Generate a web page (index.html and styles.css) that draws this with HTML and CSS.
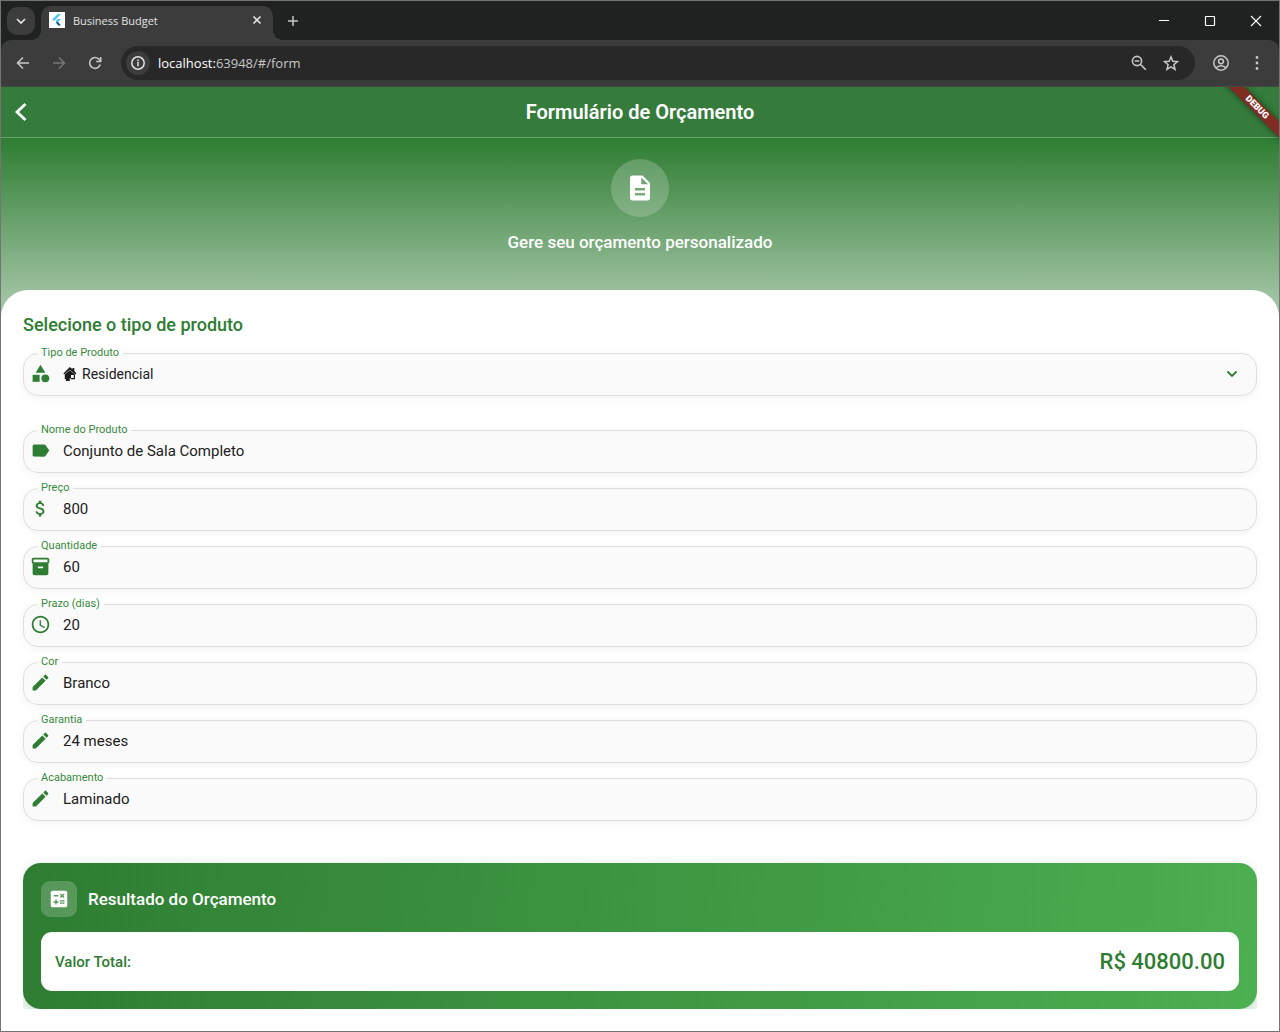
FILE: index.html
```html
<!DOCTYPE html>
<html lang="pt-BR">
<head>
<meta charset="utf-8">
<meta name="viewport" content="width=device-width, initial-scale=1">
<title>Business Budget</title>
<link rel="stylesheet" href="styles.css">
</head>
<body>
<div class="window">
  <div class="tab-strip">
    <button class="tab-search" aria-label="Search tabs"><svg width="12" height="12" viewBox="0 0 12 12" fill="none" stroke="currentColor" stroke-width="1.700"><path d="M2 4l4 4 4-4"/></svg></button>
    <div class="tab">
      <svg class="favicon" width="16" height="16" viewBox="0 0 16 16"><path fill="#fff" d="M0 0h16v16H0z"/><path fill="#47c5fb" d="M8.800 2H12L5 9 3.400 7.400zM8.800 7H12L8 11 6.400 9.400z"/><path fill="#00569e" d="M7 10.700l1.500-1.300L12 13.500H9.300z"/></svg>
      <span class="tab-title">Business Budget</span>
      <button class="tab-close" aria-label="Close tab"><svg width="10" height="10" viewBox="0 0 10 10" stroke="currentColor" stroke-width="1.600"><path d="M1.500 1.500l7 7M8.500 1.500l-7 7"/></svg></button>
    </div>
    <button class="new-tab" aria-label="New tab"><svg width="12" height="12" viewBox="0 0 12 12" stroke="currentColor" stroke-width="1.500"><path d="M6 1v10M1 6h10"/></svg></button>
    <div class="window-controls">
      <button aria-label="Minimize"><svg width="12" height="12" viewBox="0 0 12 12" stroke="currentColor"><path d="M1 5.500h10"/></svg></button>
      <button aria-label="Maximize"><svg width="12" height="12" viewBox="0 0 12 12" fill="none" stroke="currentColor" stroke-width="1.200"><rect x="1.500" y="1.500" width="9" height="9" rx=".5"/></svg></button>
      <button aria-label="Close"><svg width="12" height="12" viewBox="0 0 12 12" stroke="currentColor" stroke-width="1.200"><path d="M1 1l10 10M11 1L1 11"/></svg></button>
    </div>
  </div>
  <div class="toolbar">
    <button class="nav" aria-label="Back"><svg width="16" height="16" viewBox="0 0 16 16" fill="none" stroke="currentColor" stroke-width="1.600"><path d="M14 8H3M8 2.500L2.500 8 8 13.500"/></svg></button>
    <button class="nav nav-off" aria-label="Forward"><svg width="16" height="16" viewBox="0 0 16 16" fill="none" stroke="currentColor" stroke-width="1.600"><path d="M2 8h11M8 2.500L13.500 8 8 13.500"/></svg></button>
    <button class="nav" aria-label="Reload"><svg width="16" height="16" viewBox="0 0 16 16" fill="none" stroke="currentColor" stroke-width="1.600"><path d="M13.200 9.500A5.400 5.400 0 1 1 12.300 4.600L13.600 6M13.700 2v4.500H9.200"/></svg></button>
    <div class="omnibox">
      <button class="site-info" aria-label="Site information"><svg width="16" height="16" viewBox="0 0 16 16" fill="none" stroke="currentColor" stroke-width="1.500"><circle cx="8" cy="8" r="6.200"/><path d="M8 7v4.200M8 4.600v1.600"/></svg></button>
      <div class="url"><span class="host">localhost:</span>63948/#/form</div>
      <button class="nav" aria-label="Zoom"><svg width="18" height="18" viewBox="0 0 18 18" fill="none" stroke="currentColor" stroke-width="1.600"><circle cx="7" cy="7" r="4.600"/><path d="M10.300 10.300L15.800 15.800M4.700 7h4.600"/></svg></button>
      <button class="nav" aria-label="Bookmark"><svg width="16" height="16" viewBox="0 0 16 16" fill="none" stroke="currentColor" stroke-width="1.500"><path d="M8 1.800l1.800 4.400 4.700.4-3.600 3.100 1.100 4.600L8 11.800l-4 2.500 1.100-4.600L1.500 6.600l4.700-.4z"/></svg></button>
    </div>
    <button class="nav" aria-label="Profile"><svg width="18" height="18" viewBox="0 0 18 18" fill="none" stroke="currentColor" stroke-width="1.500"><circle cx="9" cy="9" r="7.200"/><circle cx="9" cy="7.300" r="2.400"/><path d="M4 14c2.500-3 7.500-3 10 0"/></svg></button>
    <button class="nav" aria-label="Menu"><svg width="16" height="16" viewBox="0 0 16 16" fill="currentColor"><circle cx="8" cy="2.500" r="1.400"/><circle cx="8" cy="8" r="1.400"/><circle cx="8" cy="13.500" r="1.400"/></svg></button>
  </div>

  <main class="app">
    <header class="app-bar">
      <button class="back" aria-label="Voltar"><svg width="14" height="20" viewBox="0 0 14 20" fill="none" stroke="#fff" stroke-width="2.800"><path d="M11.500 2L3 10l8.500 8"/></svg></button>
      <h1>Formulário de Orçamento</h1>
      <div class="banner-corner"><div class="banner">DEBUG</div></div>
    </header>
    <section class="hero">
      <div class="hero-icon"><svg width="30" height="30" viewBox="0 0 24 24" fill="#fff"><path d="M14 2H6c-1.100 0-1.990.9-1.990 2L4 20c0 1.100.89 2 1.990 2H18c1.100 0 2-.9 2-2V8l-6-6zm2 16H8v-2h8v2zm0-4H8v-2h8v2zm-3-5V3.500L18.500 9H13z"/></svg></div>
      <p>Gere seu orçamento personalizado</p>
    </section>
    <form class="sheet">
      <h2>Selecione o tipo de produto</h2>
      <fieldset class="field">
        <legend><label for="tipo">Tipo de Produto</label></legend>
        <div class="control">
          <svg class="icon" viewBox="0 0 24 24"><path d="M12 2l-5.500 9h11z"/><circle cx="17.500" cy="17.500" r="4.500"/><path d="M3 13.500h8v8H3z"/></svg>
          <svg class="house" width="14" height="16" viewBox="0 0 14 16"><path fill="#1c1c1c" d="M6.800 1L9.500 3.200V2h1.800v2.700L13.300 7.400l-.8 1L6.800 3.800 1.200 8.400l-.8-1zM6.800 4.200L12 8.400V13.200H7.600V12h3.200V9H8v3H6.800v3H3v-1.800H1.800V8.400z"/></svg>
          <select id="tipo"><option>Residencial</option><option>Comercial</option></select>
          <svg class="chevron" width="12" height="12" viewBox="0 0 12 12"><path d="M1.500 3.500L6 8l4.500-4.500"/></svg>
        </div>
      </fieldset>
      <div class="fields">
        <fieldset class="field">
          <legend><label for="nome">Nome do Produto</label></legend>
          <div class="control"><svg class="icon" viewBox="0 0 24 24"><path d="M17.630 5.840C17.270 5.330 16.670 5 16 5L5 5.010C3.900 5.010 3 5.900 3 7v10c0 1.100.9 1.990 2 1.990L16 19c.67 0 1.270-.33 1.630-.84L22 12l-4.370-6.160z"/></svg><input id="nome" type="text" value="Conjunto de Sala Completo"></div>
        </fieldset>
        <fieldset class="field">
          <legend><label for="preco">Preço</label></legend>
          <div class="control"><svg class="icon" viewBox="0 0 24 24"><path d="M11.800 10.900c-2.270-.59-3-1.200-3-2.150 0-1.090 1.010-1.850 2.700-1.850 1.780 0 2.440.85 2.500 2.100h2.210c-.07-1.720-1.120-3.300-3.210-3.810V3h-3v2.160c-1.940.42-3.500 1.680-3.500 3.610 0 2.310 1.910 3.460 4.700 4.130 2.500.6 3 1.480 3 2.410 0 .69-.49 1.790-2.700 1.790-2.060 0-2.870-.92-2.980-2.100h-2.200c.12 2.190 1.760 3.420 3.680 3.830V21h3v-2.150c1.950-.37 3.500-1.500 3.500-3.550 0-2.840-2.430-3.810-4.700-4.400z"/></svg><input id="preco" type="text" value="800"></div>
        </fieldset>
        <fieldset class="field">
          <legend><label for="quantidade">Quantidade</label></legend>
          <div class="control"><svg class="icon" viewBox="0 0 24 24"><path fill-rule="evenodd" d="M20 2H4c-1 0-2 .9-2 2v3.010c0 .72.43 1.340 1 1.690V20c0 1.100 1.100 2 2 2h14c.9 0 2-.9 2-2V8.700c.57-.35 1-.97 1-1.690V4c0-1.100-1-2-2-2zm-5 12H9v-2h6v2zm5-7H4V4h16v3z"/></svg><input id="quantidade" type="text" value="60"></div>
        </fieldset>
        <fieldset class="field">
          <legend><label for="prazo">Prazo (dias)</label></legend>
          <div class="control"><svg class="icon" viewBox="0 0 24 24"><path d="M11.990 2C6.470 2 2 6.480 2 12s4.470 10 9.990 10C17.520 22 22 17.520 22 12S17.520 2 11.990 2zM12 20c-4.420 0-8-3.580-8-8s3.580-8 8-8 8 3.580 8 8-3.580 8-8 8zm.5-13H11v6l5.250 3.150.75-1.230-4.500-2.670z"/></svg><input id="prazo" type="text" value="20"></div>
        </fieldset>
        <fieldset class="field">
          <legend><label for="cor">Cor</label></legend>
          <div class="control"><svg class="icon" viewBox="0 0 24 24"><path d="M3 17.250V21h3.750L17.810 9.940l-3.750-3.750L3 17.250zM20.710 7.040c.39-.39.39-1.020 0-1.410l-2.340-2.340c-.39-.39-1.020-.39-1.410 0l-1.830 1.830 3.750 3.750 1.830-1.830z"/></svg><input id="cor" type="text" value="Branco"></div>
        </fieldset>
        <fieldset class="field">
          <legend><label for="garantia">Garantia</label></legend>
          <div class="control"><svg class="icon" viewBox="0 0 24 24"><path d="M3 17.250V21h3.750L17.810 9.940l-3.750-3.750L3 17.250zM20.710 7.040c.39-.39.39-1.020 0-1.410l-2.340-2.340c-.39-.39-1.020-.39-1.410 0l-1.830 1.830 3.750 3.750 1.830-1.830z"/></svg><input id="garantia" type="text" value="24 meses"></div>
        </fieldset>
        <fieldset class="field">
          <legend><label for="acabamento">Acabamento</label></legend>
          <div class="control"><svg class="icon" viewBox="0 0 24 24"><path d="M3 17.250V21h3.750L17.810 9.940l-3.750-3.750L3 17.250zM20.710 7.040c.39-.39.39-1.020 0-1.410l-2.340-2.340c-.39-.39-1.020-.39-1.410 0l-1.830 1.830 3.750 3.750 1.830-1.830z"/></svg><input id="acabamento" type="text" value="Laminado"></div>
        </fieldset>
      </div>
      <div class="result-clip">
        <section class="result">
          <div class="result-head">
            <div class="result-icon"><svg width="22" height="22" viewBox="0 0 24 24" fill="#fff"><path d="M19 3H5c-1.100 0-2 .9-2 2v14c0 1.100.9 2 2 2h14c1.100 0 2-.9 2-2V5c0-1.100-.9-2-2-2zm-5.970 4.060L14.090 6l1.410 1.410L16.910 6l1.060 1.060-1.410 1.410 1.410 1.410-1.060 1.060-1.410-1.400-1.410 1.410-1.060-1.060 1.410-1.410-1.410-1.420zm-6.780.66h5v1.500h-5v-1.500zM11.500 16h-2v2H8v-2H6v-1.500h2v-2h1.500v2h2V16zm6.500 1.250h-5v-1.500h5v1.500zm0-2.500h-5v-1.500h5v1.500z"/></svg></div>
            <h3>Resultado do Orçamento</h3>
          </div>
          <div class="total">
            <span class="total-label">Valor Total:</span>
            <output class="total-value">R$ 40800.00</output>
          </div>
        </section>
      </div>
    </form>
  </main>
</div>
</body>
</html>
```
FILE: styles.css
```css
:root {
  --green: #2e7d32;
  --chrome: #3c3c3c;
  --strip: #1f2221;
}

* {
  box-sizing: border-box;
}

body {
  margin: 0;
  font-family: Roboto, "Liberation Sans", sans-serif;
  background: #fff;
}

h1, h2, h3, p {
  margin: 0;
}

button {
  display: grid;
  place-items: center;
  padding: 0;
  border: 0;
  background: none;
  color: #c7c7c7;
}

svg {
  display: block;
  flex: none;
}

.window {
  display: flex;
  flex-direction: column;
  min-height: 100vh;
  border: 1px solid #747474;
  background: var(--strip);
}

/* Browser frame */
.tab-strip {
  display: flex;
  align-items: center;
  height: 39px;
  padding-left: 6px;
}

.tab-search {
  width: 28px;
  height: 28px;
  border-radius: 10px;
  background: var(--chrome);
  color: #e3e3e3;
}

.tab {
  position: relative;
  align-self: flex-end;
  display: flex;
  align-items: center;
  gap: 8px;
  width: 232px;
  height: 34px;
  margin-left: 6px;
  padding: 0 8px 6px;
  border-radius: 10px 10px 0 0;
  background: var(--chrome);
}

.tab::before,
.tab::after {
  content: "";
  position: absolute;
  bottom: 0;
  width: 10px;
  height: 10px;
}

.tab::before {
  right: 100%;
  background: radial-gradient(circle at 0 0, transparent 10px, var(--chrome) 10px);
}

.tab::after {
  left: 100%;
  background: radial-gradient(circle at 100% 0, transparent 10px, var(--chrome) 10px);
}

.tab-title {
  flex: 1;
  font: 11px "Open Sans", "Noto Sans", sans-serif;
  color: #e3e3e3;
}

.tab-close {
  width: 16px;
  height: 16px;
  color: #e3e3e3;
}

.new-tab {
  width: 28px;
  height: 28px;
  margin-left: 6px;
}

.window-controls {
  display: flex;
  margin-left: auto;
}

.window-controls button {
  width: 46px;
  height: 38px;
  color: #fff;
}

.toolbar {
  display: flex;
  align-items: center;
  gap: 8px;
  height: 47px;
  padding: 0 8px;
  border-bottom: 1px solid #474747;
  border-radius: 10px 10px 0 0;
  background: var(--chrome);
}

.nav {
  width: 28px;
  height: 28px;
}

.nav-off {
  color: #757575;
}

.omnibox {
  flex: 1;
  display: flex;
  align-items: center;
  gap: 4px;
  height: 34px;
  margin: 0 4px;
  padding: 0 10px 0 5px;
  border-radius: 17px;
  background: #282828;
}

.site-info {
  width: 24px;
  height: 24px;
  border-radius: 50%;
  background: var(--chrome);
  color: #e3e3e3;
}

.url {
  flex: 1;
  padding-left: 4px;
  font: 13px "Open Sans", "Noto Sans", sans-serif;
  color: #c7c7c7;
}

.host {
  color: #fff;
}

/* App */
.app {
  flex: 1;
  display: flex;
  flex-direction: column;
  background: linear-gradient(var(--green) 51px, #9fc2a1 211px, #a9c9ab 240px);
}

.app-bar {
  position: relative;
  display: grid;
  grid-template-columns: 40px 1fr 40px;
  align-items: center;
  height: 51px;
  border-bottom: 1px solid #6aa26d;
  background: #347b3c;
}

.back {
  width: 40px;
  height: 40px;
}

.app-bar h1 {
  font-size: 20px;
  line-height: 24px;
  font-weight: 600;
  text-align: center;
  color: #fff;
}

.banner-corner {
  position: absolute;
  top: 0;
  right: 0;
  width: 60px;
  height: 60px;
  overflow: hidden;
}

.banner {
  position: absolute;
  top: 15px;
  left: -12px;
  width: 100px;
  transform: rotate(45deg);
  background: #802c22;
  box-shadow: 0 0 6px rgba(0, 0, 0, 0.5);
  color: #fff;
  font-size: 9px;
  line-height: 11px;
  font-weight: 900;
  text-align: center;
}

.hero {
  display: flex;
  flex-direction: column;
  align-items: center;
  gap: 14px;
  padding: 21px 22px 37px;
}

.hero-icon {
  display: grid;
  place-items: center;
  width: 58px;
  height: 58px;
  border-radius: 50%;
  background: rgba(255, 255, 255, 0.2);
}

.hero p {
  font-size: 17px;
  line-height: 22px;
  font-weight: 500;
  color: #fff;
}

.sheet {
  flex: 1;
  padding: 23px 22px 22px;
  border-radius: 27px 27px 0 0;
  background: #fff;
}

.sheet h2 {
  margin-bottom: 10px;
  font-size: 18px;
  line-height: 24px;
  font-weight: 500;
  color: var(--green);
}

.field {
  min-width: 0;
  margin: 0;
  padding: 0;
  border: 1px solid #dedede;
  border-radius: 15px;
  background: #fafafa;
  box-shadow: 0 2px 8px rgba(0, 0, 0, 0.05);
}

.field legend {
  margin-left: 13px;
  padding: 0 4px;
  font-size: 11px;
  line-height: 12px;
  color: #388a3c;
}

.field legend label {
  display: block;
}

.control {
  display: flex;
  align-items: center;
  height: 36px;
  padding: 0 18px 7px 6px;
}

.icon {
  width: 21px;
  height: 21px;
  fill: var(--green);
}

.control input,
.control select {
  flex: 1;
  min-width: 0;
  height: 28px;
  margin: 0 0 0 12px;
  padding: 0;
  border: 0;
  outline: 0;
  background: none;
  appearance: none;
  font: 15px Roboto, "Liberation Sans", sans-serif;
  color: #212121;
}

.control select {
  margin-left: 5px;
  font-size: 14px;
}

.house {
  margin-left: 12px;
}

.chevron {
  fill: none;
  stroke: var(--green);
  stroke-width: 1.8;
}

.fields {
  display: grid;
  gap: 9px;
  margin-top: 28px;
}

.result-clip {
  overflow: hidden;
  margin-top: 28px;
  padding-top: 14px;
}

.result {
  padding: 18px;
  border-radius: 18px;
  background: linear-gradient(97deg, #2e7d32, #4caf50);
  box-shadow: 0 5px 14px rgba(46, 125, 50, 0.3);
}

.result-head {
  display: flex;
  align-items: center;
  gap: 11px;
  margin-bottom: 15px;
}

.result-icon {
  display: grid;
  place-items: center;
  width: 36px;
  height: 36px;
  border-radius: 9px;
  background: rgba(255, 255, 255, 0.2);
}

.result h3 {
  font-size: 17px;
  line-height: 20px;
  font-weight: 500;
  color: #fff;
}

.total {
  display: flex;
  align-items: center;
  justify-content: space-between;
  min-height: 59px;
  padding: 0 14px;
  border-radius: 11px;
  background: #fff;
  color: var(--green);
  font-weight: 500;
}

.total-label {
  font-size: 15px;
}

.total-value {
  font-size: 22px;
}
```
